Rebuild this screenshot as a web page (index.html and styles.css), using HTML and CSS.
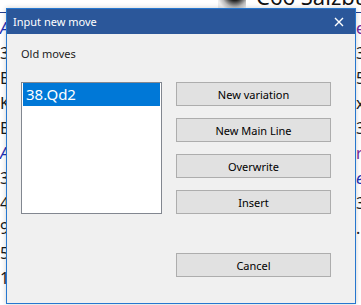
FILE: index.html
```html
<!DOCTYPE html>
<html lang="en">
<head>
  <meta charset="UTF-8" />
  <title>Input new move</title>
  <link rel="stylesheet" href="styles.css">
</head>
<body>
  <div class="page">
    <div class="page-head">
      <span class="piece"></span>
      <span class="opening">C66 Salzburg open</span>
    </div>
    <div class="moves">
      <div class="row"><span class="link">A</span><span class="visited">e</span></div>
      <div class="row"><span>3</span><span>3</span></div>
      <div class="row"><span>B</span><span>5</span></div>
      <div class="row"><span>K</span><span>x</span></div>
      <div class="row"><span>B</span><span>3</span></div>
      <div class="row"><span class="link">A</span><span class="visited">r</span></div>
      <div class="row"><span>3</span><span class="link">e</span></div>
      <div class="row"><span>4</span><span>3</span></div>
      <div class="row"><span>9</span><span>.</span></div>
      <div class="row"><span>5</span><span></span></div>
      <div class="row"><span>1</span><span></span></div>
    </div>
  </div>

  <div class="dialog">
    <div class="titlebar">
      <span class="title">Input new move</span>
      <svg class="close" width="10" height="10" viewBox="0 0 10 10">
        <path d="M1 1 L9 9 M9 1 L1 9" stroke="#fff" stroke-width="1.4" />
      </svg>
    </div>
    <div class="dialog-body">
      <div class="label">Old moves</div>
      <div class="main">
        <div class="listbox">
          <div class="item selected">38.Qd2</div>
        </div>
        <div class="actions">
          <button>New variation</button>
          <button>New Main Line</button>
          <button>Overwrite</button>
          <button>Insert</button>
          <button class="cancel">Cancel</button>
        </div>
      </div>
    </div>
  </div>
</body>
</html>
```

FILE: styles.css
```css
body {
  margin: 0;
  width: 361px;
  height: 305px;
  overflow: hidden;
  background: white;
  font-family: 'Noto Sans', sans-serif;
}

.page-head {
  height: 12px;
  overflow: hidden;
  display: flex;
  align-items: flex-end;
  gap: 10px;
  padding-left: 218px;
  white-space: nowrap;
  border-bottom: 1px solid #253f8e;
}

.piece {
  flex: none;
  width: 28px;
  height: 20px;
  margin-bottom: 4px;
  background: radial-gradient(circle at 60% 30%, #222 30%, #bbb 60%, #eee 80%);
}

.opening {
  font-size: 22px;
  line-height: 22px;
  margin-bottom: 5px;
  color: #111;
}

.moves {
  padding-top: 3px;
}

.row {
  display: grid;
  grid-template-columns: 356px 1fr;
  height: 25px;
  line-height: 25px;
  font-size: 16px;
  color: #1a1a1a;
  overflow: hidden;
}

.link {
  color: #1f2fb5;
  font-style: italic;
}

.visited {
  color: #7a2a9a;
}

.dialog {
  position: absolute;
  left: 6px;
  top: 8px;
  width: 350px;
  height: 296px;
  box-sizing: border-box;
  border: 1px solid #2677cf;
  background: #f0f0f0;
  box-shadow: 0 0 5px rgba(0, 0, 0, 0.2);
}

.titlebar {
  height: 25px;
  background: #2b579a;
  display: flex;
  align-items: center;
  justify-content: space-between;
  padding-left: 6px;
  color: white;
  font-size: 11px;
}

.close {
  margin-right: 11px;
}

.dialog-body {
  padding: 12px 14px 0;
  font-size: 11px;
  color: #222;
}

.label {
  line-height: 16px;
  margin-bottom: 20px;
}

.main {
  display: flex;
  gap: 14px;
}

.listbox {
  width: 141px;
  height: 132px;
  box-sizing: border-box;
  border: 1px solid #828790;
  background: white;
  padding: 0 1px;
}

.item {
  height: 23px;
  line-height: 23px;
  padding-left: 3px;
  font-size: 15px;
}

.item.selected {
  background: #0078d7;
  color: white;
}

.actions {
  display: flex;
  flex-direction: column;
  gap: 12px;
}

.actions button {
  width: 155px;
  height: 24px;
  border: 1px solid #adadad;
  background: #e1e1e1;
  font-family: 'Noto Sans', sans-serif;
  font-size: 11px;
  color: black;
  padding: 0;
}

.actions .cancel {
  margin-top: 27px;
}
```
